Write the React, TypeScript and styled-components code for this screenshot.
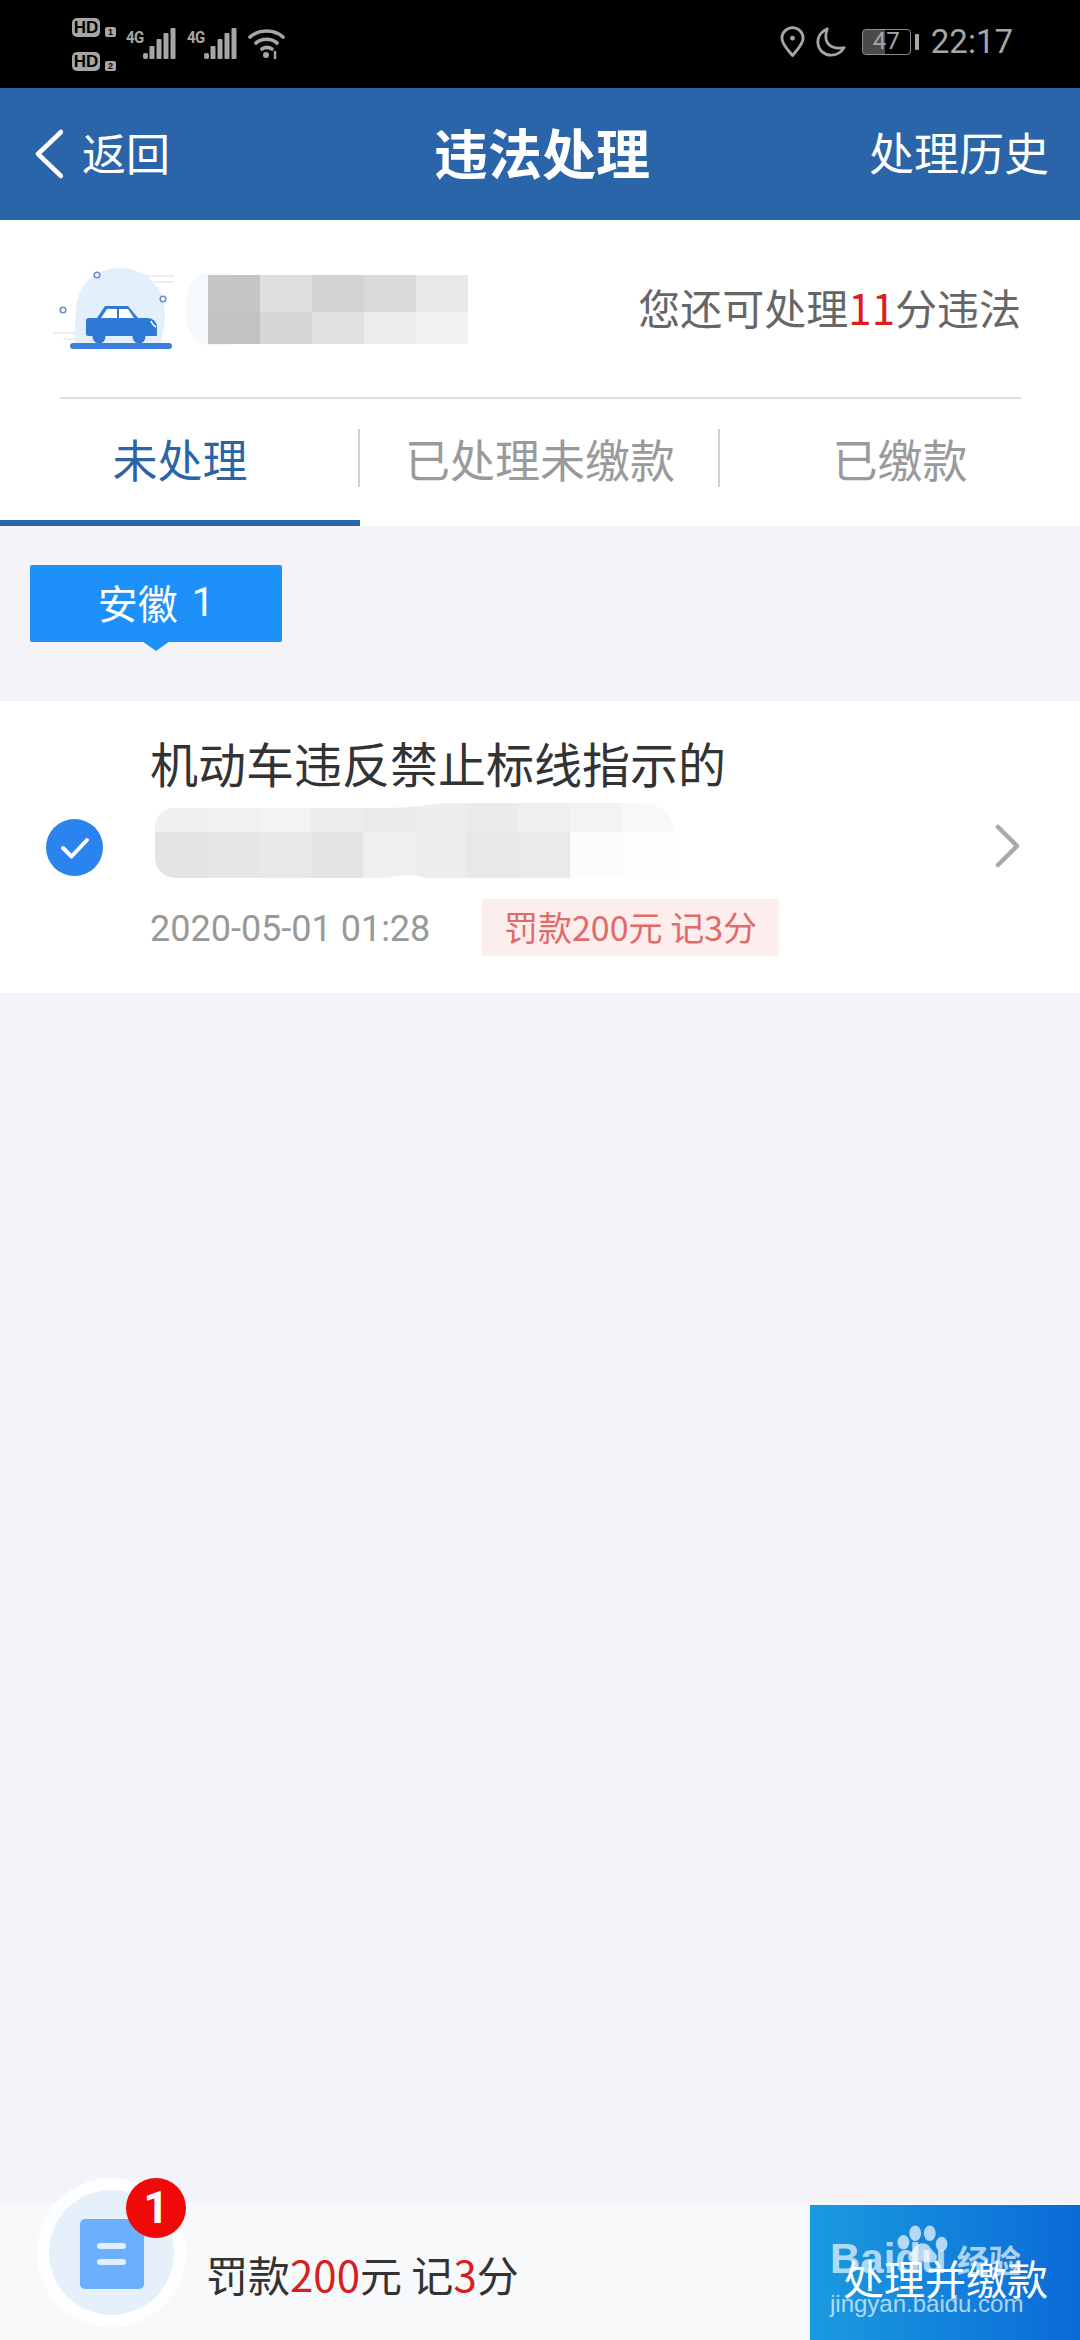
import React from "react";
import styled, { createGlobalStyle } from "styled-components";

const Global = createGlobalStyle`
  html, body { margin: 0; padding: 0; background: #f3f3f8; }
  * { box-sizing: border-box; }
`;

const CJK = `"Noto Sans CJK SC", "Noto Sans", sans-serif`;

const Page = styled.div`
  width: 1080px;
  height: 2340px;
  display: flex;
  flex-direction: column;
  overflow: hidden;
  position: relative;
  background: #f3f3f8;
  font-family: ${CJK};
`;

const StatusBar = styled.div`
  height: 88px;
  background: #000;
  display: flex;
  justify-content: space-between;
  align-items: flex-start;
  padding: 18px 67px 0 72px;
  color: #a6a6a6;
`;
const StatusLeft = styled.div`
  display: flex;
  align-items: flex-start;
  gap: 10px;
`;
const HdStack = styled.div`
  display: flex;
  flex-direction: column;
  gap: 15px;
`;
const HdLine = styled.div`
  display: flex;
  align-items: flex-end;
  gap: 5px;
  height: 19px;
`;
const HdBox = styled.span`
  width: 28px;
  height: 19px;
  background: #a6a6a6;
  color: #000;
  border-radius: 5px;
  font: 700 17px/19px "Liberation Sans", sans-serif;
  text-align: center;
`;
const SimBox = styled.span`
  width: 11px;
  height: 10px;
  background: #a6a6a6;
  color: #000;
  border-radius: 2px;
  font: 700 9px/10px "Liberation Sans", sans-serif;
  text-align: center;
`;
const Signal = styled.div`
  display: flex;
  align-items: flex-start;
  margin-top: 10px;
`;
const NetLabel = styled.span`
  font: 700 15px/16px "Roboto", sans-serif;
  width: 17px;
  letter-spacing: -0.5px;
  transform: scaleY(1.15);
  transform-origin: top;
`;
const StatusRight = styled.div`
  display: flex;
  align-items: center;
  height: 42px;
  margin-top: 3px;
`;
const BatteryWrap = styled.div`
  display: flex;
  align-items: center;
  gap: 4px;
  margin: 0 12px 0 16px;
`;
const BatteryBody = styled.div`
  width: 49px;
  height: 26px;
  border: 1.5px solid #8e8e8e;
  border-radius: 4px;
  font: 400 24px/23px "Roboto", sans-serif;
  text-align: center;
  color: #a6a6a6;
  background: linear-gradient(90deg, #4a4a4a 0, #4a4a4a 47%, transparent 47%);
`;
const BatteryCap = styled.div`
  width: 4px;
  height: 16px;
  background: #a6a6a6;
  border-radius: 1px;
`;
const Clock = styled.span`
  font: 400 33px/42px "Roboto", sans-serif;
  color: #a6a6a6;
`;

const Header = styled.header`
  height: 132px;
  background: #2b65a9;
  color: #fff;
  display: grid;
  grid-template-columns: 1fr auto 1fr;
  align-items: center;
  padding: 0 31px 4px 35px;
`;
const BackLink = styled.div`
  display: flex;
  align-items: center;
  gap: 19px;
  font-size: 44px;
  line-height: 60px;
`;
const BackIcon = styled.svg`
  margin-top: 4px;
`;
const Title = styled.h1`
  margin: 0;
  font-size: 54px;
  font-weight: 700;
  line-height: 60px;
`;
const HeaderAction = styled.div`
  font-size: 45px;
  line-height: 60px;
  text-align: right;
`;

const TopPanel = styled.section`
  background: #fff;
`;
const InfoRow = styled.div`
  height: 177px;
  margin: 0 60px 0 50px;
  display: flex;
  align-items: flex-start;
  justify-content: space-between;
  position: relative;
  padding-top: 45px;
`;
const InfoLeft = styled.div`
  display: flex;
`;
const PlateMask = styled.div`
  margin: 10px 0 0 33px;
  width: 260px;
  height: 69px;
  display: grid;
  grid-template-columns: repeat(5, 52px);
  grid-template-rows: 37px 32px;
  position: relative;
  &::before {
    content: "";
    position: absolute;
    left: -23px;
    top: -2px;
    width: 46px;
    height: 72px;
    border-radius: 50% 0 0 50%;
    background: #f5f9fe;
    z-index: 0;
  }
`;
const MaskCell = styled.div<{ $c: string }>`
  background: ${(p) => p.$c};
  position: relative;
  z-index: 1;
`;
const Remaining = styled.div`
  font-size: 42px;
  line-height: 50px;
  color: #666;
  margin: 17px -1px 0 0;
`;
const RedNum = styled.span`
  color: #d81e1e;
`;
const Divider = styled.div`
  height: 2px;
  margin: 0 59px 0 60px;
  background: #dedede;
`;
const Tabs = styled.nav`
  display: grid;
  grid-template-columns: repeat(3, 1fr);
  height: 127px;
`;
const Tab = styled.div<{ $active?: boolean; $sep?: boolean }>`
  position: relative;
  display: flex;
  align-items: center;
  justify-content: center;
  height: 127px;
  padding-bottom: 2px;
  font-size: 45px;
  color: ${(p) => (p.$active ? "#2b65a9" : "#9a9a9a")};
  border-bottom: 6px solid ${(p) => (p.$active ? "#2b65a9" : "transparent")};
  ${(p) =>
    p.$sep
      ? `&::after {
          content: "";
          position: absolute;
          right: 0;
          top: 30px;
          width: 2px;
          height: 58px;
          background: #cfcfcf;
        }`
      : ""}
`;

const Region = styled.div`
  margin: 39px 0 0 30px;
  width: 252px;
  height: 77px;
  background: #1e90fa;
  color: #fff;
  font-size: 40px;
  padding-bottom: 3px;
  border-radius: 2px;
  display: flex;
  align-items: center;
  justify-content: center;
  position: relative;
  &::after {
    content: "";
    position: absolute;
    left: 112px;
    bottom: -9px;
    border-left: 14px solid transparent;
    border-right: 14px solid transparent;
    border-top: 10px solid #1e90fa;
  }
`;
const RegionNum = styled.span`
  margin-left: 14px;
  font-family: "Roboto", sans-serif;
`;

const Card = styled.article`
  margin-top: 59px;
  height: 292px;
  background: #fff;
  display: flex;
  align-items: flex-start;
  padding: 0 59px 0 46px;
`;
const Check = styled.div`
  width: 57px;
  height: 57px;
  margin-top: 118px;
  flex: none;
`;
const CardBody = styled.div`
  flex: 1;
  margin-left: 47px;
  padding-top: 31px;
`;
const CardTitle = styled.div`
  font-size: 48px;
  line-height: 60px;
  color: #333;
`;
const AddressMask = styled.div`
  margin: 11px 0 0 5px;
  width: 519px;
  height: 75px;
  display: grid;
  grid-template-columns: repeat(10, 1fr);
  grid-template-rows: 29px 46px;
  clip-path: path("M20 5 H230 C262 5 275 0 300 0 H485 C505 0 519 12 519 29 V75 H270 C250 69 240 75 225 75 H22 C8 75 0 65 0 55 V25 C0 13 8 5 20 5 Z");
`;
const MetaRow = styled.div`
  display: flex;
  align-items: center;
  margin-top: 18px;
`;
const DateText = styled.span`
  font: 400 36px/57px "Roboto", sans-serif;
  color: #999;
  width: 332px;
  padding-top: 5px;
`;
const Penalty = styled.span`
  width: 297px;
  height: 57px;
  background: #fdeeee;
  color: #e26a6a;
  font-size: 34px;
  padding-bottom: 2px;
  display: flex;
  align-items: center;
  justify-content: center;
`;
const ChevronBox = styled.div`
  margin-top: 123px;
  flex: none;
`;

const Footer = styled.footer`
  margin-top: auto;
  height: 137px;
  background: #f7f9fb;
  display: flex;
  align-items: stretch;
  justify-content: space-between;
  position: relative;
`;
const FabRing = styled.div`
  position: absolute;
  left: 37px;
  top: -25px;
  width: 149px;
  height: 149px;
  border-radius: 50%;
  background: #fdfeff;
  display: flex;
  align-items: center;
  justify-content: center;
`;
const FabInner = styled.div`
  width: 125px;
  height: 125px;
  border-radius: 50%;
  background: #e6f0fb;
  display: flex;
  align-items: center;
  justify-content: center;
`;
const Doc = styled.div`
  width: 64px;
  height: 70px;
  border-radius: 5px;
  background: #6cafff;
  display: flex;
  flex-direction: column;
  align-items: center;
  justify-content: center;
  gap: 10px;
  margin-top: 3px;
`;
const DocLine = styled.span`
  width: 29px;
  height: 6px;
  border-radius: 3px;
  background: #e3effd;
`;
const CountBadge = styled.div`
  position: absolute;
  right: 0;
  top: 0;
  width: 60px;
  height: 60px;
  border-radius: 50%;
  background: #f10a0a;
  color: #fff;
  font: 700 44px/60px "Roboto", sans-serif;
  text-align: center;
`;
const Summary = styled.div`
  margin: 40px 0 0 206px;
  font-size: 42px;
  line-height: 62px;
  color: #333;
`;
const PayButton = styled.div`
  width: 270px;
  margin-top: 2px;
  background: linear-gradient(90deg, #1a9bdf, #0b6ad8);
  color: #fff;
  font-size: 41px;
  display: flex;
  justify-content: flex-end;
  padding: 42px 32px 0 0;
  line-height: 60px;
  position: relative;
`;
const Watermark = styled.div`
  position: absolute;
  left: 20px;
  top: 20px;
  width: 200px;
  color: rgba(255, 255, 255, 0.68);
  pointer-events: none;
`;
const WatermarkBrand = styled.div`
  display: flex;
  align-items: center;
  margin-top: 16px;
  height: 36px;
  font: 700 42px/36px "Liberation Sans", sans-serif;
  white-space: nowrap;
`;
const WatermarkCn = styled.span`
  margin-left: 10px;
  font: 700 32px/36px ${CJK};
`;
const WatermarkUrl = styled.div`
  margin-top: 12px;
  font: 400 24px/30px "Liberation Sans", sans-serif;
  white-space: nowrap;
`;
const Paw = styled.svg`
  position: absolute;
  left: 65px;
  top: 0;
`;

const plate = ["#c5c5c5", "#dfdfdf", "#d3d3d3", "#dadada", "#e8e8e8", "#c2c2c2", "#d6d6d6", "#e0e0e0", "#ececec", "#f2f2f2"];
const address = [
  "#f0f0f0", "#f1f1f1", "#f3f3f3", "#ececec", "#eaeaea", "#eeeeee", "#ebebeb", "#efefef", "#f3f3f3", "#f8f8f8",
  "#e4e4e4", "#e6e6e6", "#e8e8e8", "#e4e4e4", "#f0f0f0", "#ececec", "#e8e8e8", "#eaeaea", "#fcfcfc", "#fdfdfd",
];

const Bars = () => (
  <svg width="34" height="32" viewBox="0 0 34 32" fill="#a6a6a6">
    <rect x="0" y="25" width="5" height="6" rx="2" />
    <rect x="6.5" y="18" width="5" height="13" rx="1" />
    <rect x="13.5" y="11" width="5" height="20" rx="1" />
    <rect x="20.5" y="5" width="5" height="26" rx="1" />
    <rect x="27.5" y="0" width="5" height="31" rx="1" />
  </svg>
);

const CarArt = () => (
  <svg width="125" height="85" viewBox="0 0 125 85">
    <path d="M25 78C25 60 25 50 26 42C29 18 46 3 70 3C95 3 115 22 115 48C115 60 113 70 110 78z" fill="#e4effc" />
    <g stroke="#e8eef6" strokeWidth="2" strokeLinecap="round">
      <path d="M95 11h28M105 17h18" />
      <path d="M4 68h32M14 74h20" />
    </g>
    <g fill="#fff" stroke="#6b8fc4" strokeWidth="1.6">
      <circle cx="47" cy="10" r="2.8" />
      <circle cx="113" cy="34" r="2.8" />
      <circle cx="13" cy="45" r="2.8" />
    </g>
    <circle cx="49" cy="72" r="6.5" fill="#2f78d4" />
    <circle cx="89" cy="72" r="6.5" fill="#2f78d4" />
    <path d="M39 53H47L55 41H78L88 53H98a9 9 0 0 1 9 9v8a1 1 0 0 1-1 1H38a2 2 0 0 1-2-2V56a3 3 0 0 1 3-3z" fill="#2f7ad8" />
    <path d="M51 53l6-9h10v9zM69 44h9l6 9H69z" fill="#fff" />
    <path d="M101 56c1 3 3 5 5 6" stroke="#fff" strokeWidth="1.5" fill="none" />
    <rect x="20" y="78" width="102" height="6" rx="3" fill="#3a80dc" />
  </svg>
);

const App: React.FC = () => (
  <Page>
    <Global />
    <StatusBar>
      <StatusLeft>
        <HdStack>
          <HdLine>
            <HdBox>HD</HdBox>
            <SimBox>1</SimBox>
          </HdLine>
          <HdLine>
            <HdBox>HD</HdBox>
            <SimBox>2</SimBox>
          </HdLine>
        </HdStack>
        <Signal>
          <NetLabel>4G</NetLabel>
          <Bars />
        </Signal>
        <Signal>
          <NetLabel>4G</NetLabel>
          <Bars />
        </Signal>
        <svg width="38" height="32" viewBox="0 0 38 32" fill="none" stroke="#a6a6a6" strokeWidth="3.6" strokeLinecap="round" style={{ marginTop: 10 }}>
          <path d="M2 9C11 1 26 1 35 9" />
          <path d="M8 15c6-5 15-5 21 0" />
          <path d="M14 21c3-2 7-2 10 0" />
          <circle cx="18" cy="27" r="3" fill="#a6a6a6" stroke="none" />
          <path d="M27 24v6" strokeWidth="2.5" />
        </svg>
      </StatusLeft>
      <StatusRight>
        <svg width="25" height="32" viewBox="0 0 26 32" fill="none" stroke="#a6a6a6" strokeWidth="3" style={{ marginRight: 11 }}>
          <path d="M13 30C8 24 2 18 2 12a11 11 0 0 1 22 0c0 6-6 12-11 18z" strokeLinejoin="round" />
          <circle cx="13" cy="12" r="2.5" fill="#a6a6a6" stroke="none" />
        </svg>
        <svg width="30" height="32" viewBox="0 0 32 32" fill="none" stroke="#a6a6a6" strokeWidth="3" strokeLinejoin="round">
          <path d="M12 2C5 5 1.500 11 2 17c.7 8 7 13 14 13 6 0 11-3 14-8-9 2-17-1-19-8-1-4-.5-8 1-12z" />
        </svg>
        <BatteryWrap>
          <BatteryBody>47</BatteryBody>
          <BatteryCap />
        </BatteryWrap>
        <Clock>22:17</Clock>
      </StatusRight>
    </StatusBar>

    <Header>
      <BackLink>
        <BackIcon width="28" height="50" viewBox="0 0 28 50" fill="none" stroke="#fff" strokeWidth="4.500" strokeLinecap="round" strokeLinejoin="round">
          <path d="M26 3L3 25l23 22" />
        </BackIcon>
        返回
      </BackLink>
      <Title>违法处理</Title>
      <HeaderAction>处理历史</HeaderAction>
    </Header>

    <TopPanel>
      <InfoRow>
        <InfoLeft>
          <CarArt />
          <PlateMask>
            {plate.map((c, i) => (
              <MaskCell key={i} $c={c} />
            ))}
          </PlateMask>
        </InfoLeft>
        <Remaining>
          您还可处理<RedNum>11</RedNum>分违法
        </Remaining>
      </InfoRow>
      <Divider />
      <Tabs>
        <Tab $active $sep>未处理</Tab>
        <Tab $sep>已处理未缴款</Tab>
        <Tab>已缴款</Tab>
      </Tabs>
    </TopPanel>

    <Region>
      安徽<RegionNum>1</RegionNum>
    </Region>

    <Card>
      <Check>
        <svg width="57" height="57" viewBox="0 0 57 57">
          <circle cx="28.500" cy="28.500" r="28.500" fill="#2a83ee" />
          <path d="M17 29l8.500 8.500L41 21" fill="none" stroke="#fff" strokeWidth="4" strokeLinecap="round" strokeLinejoin="round" />
        </svg>
      </Check>
      <CardBody>
        <CardTitle>机动车违反禁止标线指示的</CardTitle>
        <AddressMask>
          {address.map((c, i) => (
            <MaskCell key={i} $c={c} />
          ))}
        </AddressMask>
        <MetaRow>
          <DateText>2020-05-01 01:28</DateText>
          <Penalty>罚款200元 记3分</Penalty>
        </MetaRow>
      </CardBody>
      <ChevronBox>
        <svg width="27" height="44" viewBox="0 0 27 44" fill="none" stroke="#a8a8a8" strokeWidth="4.500" strokeLinecap="round" strokeLinejoin="round">
          <path d="M4 3l19 19L4 41" />
        </svg>
      </ChevronBox>
    </Card>

    <Footer>
      <FabRing>
        <FabInner>
          <Doc>
            <DocLine />
            <DocLine />
          </Doc>
        </FabInner>
        <CountBadge>1</CountBadge>
      </FabRing>
      <Summary>
        罚款<RedNum>200</RedNum>元 记<RedNum>3</RedNum>分
      </Summary>
      <PayButton>
        处理并缴款
        <Watermark>
          <Paw width="55" height="40" viewBox="0 0 58 44" fill="rgba(255,255,255,0.68)">
            <ellipse cx="8" cy="19" rx="6.500" ry="8" />
            <ellipse cx="21" cy="9" rx="6.500" ry="8.500" />
            <ellipse cx="37" cy="9" rx="6.500" ry="8.500" />
            <ellipse cx="50" cy="21" rx="6.500" ry="8" />
            <path d="M29 20c-8 0-9 7-14 11-4 4-1 11 6 10 5-1 11-1 16 0 7 1 10-6 6-10-5-4-6-11-14-11z" />
          </Paw>
          <WatermarkBrand>
            Baidu<WatermarkCn>经验</WatermarkCn>
          </WatermarkBrand>
          <WatermarkUrl>jingyan.baidu.com</WatermarkUrl>
        </Watermark>
      </PayButton>
    </Footer>
  </Page>
);

export default App;
